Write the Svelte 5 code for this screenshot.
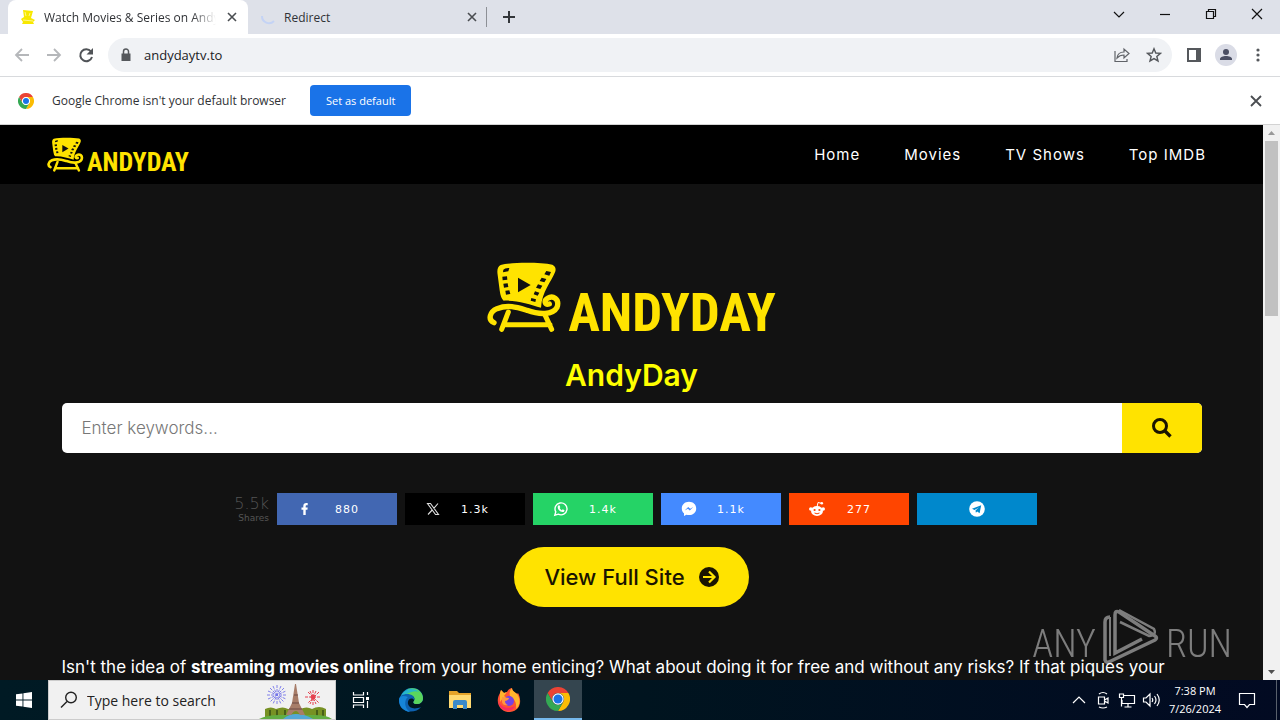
<script>
  const nav = ['Home', 'Movies', 'TV Shows', 'Top IMDB'];
  const shares = [
    { id: 'facebook', count: '880', color: '#4267b2' },
    { id: 'x', count: '1.3k', color: '#000000' },
    { id: 'whatsapp', count: '1.4k', color: '#25d366' },
    { id: 'messenger', count: '1.1k', color: '#448aff' },
    { id: 'reddit', count: '277', color: '#ff4500' },
    { id: 'telegram', count: '', color: '#0088cc' }
  ];
  let keywords = $state('');
</script>

{#snippet chair()}
  <svg class="chair" viewBox="25 35 225 216" aria-hidden="true">
    <path fill="#ffe300" d="M66 44C104 35 185 36 221 43Q235 50 229 66C218 94 190 124 187 172C154 162 112 149 75 151Q66 145 63 120L57 74Q53 50 66 44Z" />
    <g fill="#111">
      <path d="M74 58q5-6 18-5l-3 10-16 3zM71 79l14-1 1 10-14 2zM74 100l13-1 2 11-13 2zM80 121l12-1 3 11-13 2z" />
      <path d="M203 62l14 3-5 11-15-4zM189 82l14 4-6 10-14-4zM178 102l13 4-6 10-13-4zM169 123l13 4-5 9-12-4zM158 143l14 4-2 8-14-4z" />
      <path d="M118 82l38 22-38 22z" />
    </g>
    <g fill="none" stroke="#ffe300" stroke-linecap="round" stroke-width="16">
      <path d="M46 217C26 208 34 184 55 175C88 162 115 171 145 180C183 194 222 194 235 171C244 145 222 134 207 144C194 152 199 164 212 161" />
      <path d="M89 185L69 237M200 196L219 237M76 223H214" stroke-width="15" />
    </g>
  </svg>
{/snippet}

{#snippet cross()}
  <svg width="16" height="16" viewBox="0 0 16 16"><path d="M4 4l8 8M12 4l-8 8" stroke="#4a4d51" stroke-width="1.600" /></svg>
{/snippet}

{#snippet chromeLogo(size)}
  <svg width={size} height={size} viewBox="0 0 24 24">
    <path fill="#ea4335" d="M1.600 6A12 12 0 0 1 22.400 6H12A6 6 0 0 0 6.800 15z" />
    <path fill="#fbbc04" d="M22.400 6A12 12 0 0 1 12 24L17.200 15A6 6 0 0 0 12 6z" />
    <path fill="#34a853" d="M12 24A12 12 0 0 1 1.600 6L6.800 15A6 6 0 0 0 17.200 15z" />
    <circle cx="12" cy="12" r="5.700" fill="#fff" /><circle cx="12" cy="12" r="4.500" fill="#1a73e8" />
  </svg>
{/snippet}

<div class="screen">
  <div class="tabs">
    <div class="tab active">
      <svg width="16" height="16" viewBox="0 0 16 16"><path fill="#f8e800" d="M3 1l10 1-2 7 4 2-2 2 1 2H2l1-2-2-3 3-2z" /><path d="M3 11l10 1M5 3l1 4m4-3l-1 3" stroke="#fff88a" /></svg>
      <span class="tab-title fade">Watch Movies &amp; Series on AndyDay</span>
      <button aria-label="Close tab">{@render cross()}</button>
    </div>
    <div class="tab">
      <svg width="16" height="16" viewBox="0 0 16 16"><path d="M2 7A7 7 0 0 0 14 12" fill="none" stroke="#c4d3f5" stroke-width="2" /></svg>
      <span class="tab-title">Redirect</span>
      <button aria-label="Close tab">{@render cross()}</button>
    </div>
    <i class="divider"></i>
    <button class="new-tab" aria-label="New tab"><svg width="16" height="16" viewBox="0 0 16 16"><path d="M8 2v12M2 8h12" stroke="#33363a" stroke-width="2" /></svg></button>
    <div class="window-controls">
      <button aria-label="Search tabs"><svg width="14" height="14" viewBox="0 0 14 14"><path d="M2 5l5 5 5-5" /></svg></button>
      <button aria-label="Minimize"><svg width="14" height="14" viewBox="0 0 14 14"><path d="M2 7.500h10" /></svg></button>
      <button aria-label="Restore"><svg width="14" height="14" viewBox="0 0 14 14"><path d="M2.500 4.500h7v7h-7zM4.500 4.500v-2h7v7h-2" /></svg></button>
      <button aria-label="Close window"><svg width="14" height="14" viewBox="0 0 14 14"><path d="M2 2l10 10M12 2L2 12" /></svg></button>
    </div>
  </div>

  <div class="toolbar">
    <div class="group">
      <button aria-label="Back"><svg width="20" height="20" viewBox="0 0 20 20"><path d="M17 10H4M10 4l-6 6 6 6" stroke="#b5b7ba" stroke-width="1.800" fill="none" /></svg></button>
      <button aria-label="Forward"><svg width="20" height="20" viewBox="0 0 20 20"><path d="M3 10h13M10 4l6 6-6 6" stroke="#b5b7ba" stroke-width="1.800" fill="none" /></svg></button>
      <button aria-label="Reload"><svg width="20" height="20" viewBox="0 0 20 20"><path d="M15 6.500A6 6 0 1 0 16 12" stroke="#505357" stroke-width="2" fill="none" /><path d="M17 3v6.500h-6.500z" fill="#505357" /></svg></button>
    </div>
    <div class="omnibox">
      <button aria-label="Site information"><svg width="16" height="16" viewBox="0 0 16 16"><path d="M3.500 6.500h9V14h-9z" fill="#55585c" /><path d="M5.500 7V4.500a2.500 2.500 0 0 1 5 0V7" stroke="#55585c" stroke-width="1.500" fill="none" /></svg></button>
      <input aria-label="Address" value="andydaytv.to" />
      <button aria-label="Share"><svg width="18" height="18" viewBox="0 0 18 18" fill="none" stroke="#606368" stroke-width="1.200"><path d="M2 5v10.500h12V13M4 12c.5-4 3-6 7-6V3l5 4.500-5 4.500V9c-3 0-5 .8-7 3z" /></svg></button>
      <button aria-label="Bookmark"><svg width="16" height="16" viewBox="0 0 18 18"><path d="M9 2l2 4.800 5.200.4-4 3.400 1.300 5.100L9 13l-4.500 2.700 1.300-5.100-4-3.400 5.200-.4z" fill="none" stroke="#55585c" stroke-width="1.600" /></svg></button>
    </div>
    <div class="group">
      <button aria-label="Side panel"><svg width="16" height="16" viewBox="0 0 16 16"><path d="M2 2h12v12H2z" fill="none" stroke="#55585c" stroke-width="2" /><path d="M10 2h4v12h-4z" fill="#55585c" /></svg></button>
      <button aria-label="Profile"><svg width="22" height="22" viewBox="0 0 22 22"><circle cx="11" cy="11" r="11" fill="#dadce6" /><circle cx="11" cy="8" r="3" fill="#4a4e63" /><path d="M5 16v-1c0-4 12-4 12 0v1z" fill="#4a4e63" /></svg></button>
      <button aria-label="Menu"><svg width="16" height="16" viewBox="0 0 16 16" fill="#55585c"><circle cx="8" cy="3" r="1.600" /><circle cx="8" cy="8" r="1.600" /><circle cx="8" cy="13" r="1.600" /></svg></button>
    </div>
  </div>

  <div class="infobar">
    {@render chromeLogo(16)}
    <span>Google Chrome isn't your default browser</span>
    <button class="default">Set as default</button>
    <button class="dismiss" aria-label="Dismiss"><svg width="16" height="16" viewBox="0 0 16 16"><path d="M3 3l10 10M13 3L3 13" stroke="#4a4d51" stroke-width="1.800" /></svg></button>
  </div>

  <div class="viewport">
    <div class="site">
      <header>
        <a class="brand small" href="#home">{@render chair()}<span>ANDYDAY</span></a>
        <nav>{#each nav as item}<a href="#{item}">{item}</a>{/each}</nav>
      </header>
      <main>
        <a class="brand" href="#home">{@render chair()}<span>ANDYDAY</span></a>
        <h1>AndyDay</h1>
        <form onsubmit={(e) => e.preventDefault()}>
          <input aria-label="Keywords" placeholder="Enter keywords..." bind:value={keywords} />
          <button aria-label="Search"><svg width="20" height="20" viewBox="0 0 20 20" fill="none" stroke="#1a1400"><circle cx="8" cy="8" r="6.500" stroke-width="3" /><path d="M12.500 12.500l6 6" stroke-width="3.400" /></svg></button>
        </form>
        <div class="shares">
          <div class="total"><b>5.5k</b><small>Shares</small></div>
          {#each shares as s}
            <button style="background:{s.color}" aria-label="Share on {s.id}">
              <svg width="16" height="16" viewBox="0 0 16 16" fill="#fff">
                {#if s.id === 'facebook'}
                  <path d="M6.300 14V8.800H4.500V6.500h1.800V5c0-2 1.100-3 3-3h1.400v2.200H9.600c-.7 0-.9.300-.9 1v1.300h2l-.3 2.300H8.700V14z" />
                {:else if s.id === 'x'}
                  <path d="M2.500 2.500h3l8 11h-3zM13 2.500L8.800 7.300M7.200 9L3 13.500" fill="none" stroke="#ddd" stroke-width="1.100" />
                {:else if s.id === 'whatsapp'}
                  <path d="M1.800 14.200l1-3.400A6 6 0 1 1 5.300 13.200z" fill="none" stroke="#fff" stroke-width="1.400" />
                  <path d="M5.300 4.500l1.200-.2.800 1.900-.7.900c.5 1 1.200 1.600 2.200 2.100l.9-.9 1.800.9c0 3-4.200 1.900-5.700-.1C4.400 7.500 4.400 5.500 5.300 4.500z" />
                {:else if s.id === 'messenger'}
                  <path d="M8 .8C3.800.8.800 3.700.8 7.400c0 2 .8 3.700 2.200 4.900v2.600l2.400-1.200c.8.200 1.700.4 2.600.4 4.200 0 7.200-2.900 7.200-6.700S12.200.8 8 .8z" />
                  <path d="M3.700 9.500l3.500-3.600 2 1.800 3-1.800-3.400 3.600-1.900-1.800z" fill="#448aff" />
                {:else if s.id === 'reddit'}
                  <ellipse cx="8" cy="10" rx="6" ry="5" /><circle cx="1.800" cy="8" r="1.800" /><circle cx="14.200" cy="8" r="1.800" />
                  <path d="M8 6l1-4.500 3.500.8" fill="none" stroke="#fff" /><circle cx="12.800" cy="2.200" r="1.300" />
                  <circle cx="5.600" cy="9" r="1.100" fill="#ff4500" /><circle cx="10.400" cy="9" r="1.100" fill="#ff4500" />
                  <path d="M5.500 12q2.500 1.600 5 0" fill="none" stroke="#ff4500" />
                {:else}
                  <circle cx="8" cy="8" r="7.800" /><path d="M3 7.800l9.200-3.600-1.600 8-2.400-1.800-1.300 1.300-.4-2.300 3.700-3.200-4.700 2.900z" fill="#0088cc" />
                {/if}
              </svg>
              {#if s.count}<span>{s.count}</span>{/if}
            </button>
          {/each}
        </div>
        <a class="full" href="#full">View Full Site
          <svg width="20" height="20" viewBox="0 0 20 20"><circle cx="10" cy="10" r="10" fill="#1a1400" /><path d="M4 10h11M10 4.500l5.500 5.500-5.500 5.500" stroke="#ffe300" stroke-width="2.200" fill="none" /></svg>
        </a>
        <p>Isn't the idea of <strong>streaming movies online</strong> from your home enticing? What about doing it for free and without any risks? If that piques your</p>
      </main>
    </div>
    <div class="scrollbar">
      <svg width="17" height="16" viewBox="0 0 17 16"><path d="M5 10l3.500-4 3.500 4z" fill="#999" /></svg>
      <i></i>
      <svg width="17" height="16" viewBox="0 0 17 16"><path d="M5 6l3.500 4L12 6z" fill="#505050" /></svg>
    </div>
    <div class="watermark">
      <span>ANY</span>
      <svg width="56" height="58" viewBox="0 0 56 58" fill="none" stroke="#fff" stroke-width="3.500">
        <path d="M7 9Q2 9 2 14V52Q3 56 8 53L52 32Q55 30 52 28L16 4Q12 2 12 7V45L39 31" />
        <path d="M17 14L46 28Q54 27 51 21L16 2" stroke-width="2.500" />
        <path d="M7 9V48" stroke-width="2" />
      </svg>
      <span>RUN</span>
    </div>
  </div>

  <footer>
    <button class="start" aria-label="Start"><svg width="16" height="16" viewBox="0 0 16 16" fill="#fff"><path d="M0 2.300l6.500-.9v6.100H0zM7.400 1.300L16 0v7.500H7.400zM0 8.400h6.500v6.200L0 13.700zM7.400 8.400H16V16l-8.600-1.200z" /></svg></button>
    <label class="search">
      <svg width="18" height="18" viewBox="0 0 18 18" fill="none" stroke="#222" stroke-width="1.400"><circle cx="11" cy="6.500" r="5.300" /><path d="M7 10.500L1 16.500" /></svg>
      <input aria-label="Type here to search" placeholder="Type here to search" />
      <svg width="78" height="38" viewBox="0 0 78 38">
        <g stroke="#7474ea" stroke-width="0.900"><path d="M20 4v20M10 14h20M13 7l14 14M27 7L13 21M16 5l8 18M24 5l-8 18M11 10l18 8M11 18l18-8" stroke-dasharray="3 1" /></g>
        <g stroke="#e5404e" stroke-width="1"><path d="M56 9v15M48 16h16M51 11l11 11M62 11L51 22M53 10l6 13M59 10l-6 13" stroke-dasharray="3 1" /><circle cx="56" cy="16" r="2" fill="#e5404e" /></g>
        <path d="M8 28q6-3 11 0 7-3 12 0h12q7-3 12 0 7-4 14 0v9H8z" fill="#779124" /><path d="M13 29v8M20 29v8M28 29v8M60 29v8M66 29v8" stroke="#465f18" stroke-width="2" />
        <path d="M2 38q8-4 20-4h35q13 0 18 4z" fill="#62ad42" /><path d="M26 38q6-5 13-5 9 0 17 5z" fill="#54a8d6" />
        <path d="M38 3h1l3 19 6 12h-5q-4-8-9 0h-5l6-12z" fill="#a77d69" /><path d="M35 22h7M32 28h13M37 14h4" stroke="#6d4b45" stroke-width="1.200" />
      </svg>
    </label>
    <div class="apps">
      <button class="task" aria-label="Task view"><svg width="18" height="18" viewBox="0 0 18 18" fill="none" stroke="#fff" stroke-width="1.200"><path d="M1.500 1v3h10V1M1.500 17v-3h10v3M1.500 6.500h10v5h-10zM15.500 1v3M15.500 10v7" /><path d="M14 6h3v3h-3z" fill="#fff" stroke="none" /></svg></button>
      <button aria-label="Edge"><svg width="24" height="24" viewBox="0 0 24 24">
        <path fill="#1788d1" d="M1 10C3 3 8 0 13 0c7 0 11 5 11 10 0 4-3 6-6 6-4 0-4-2-3-3 2-3-1-6-5-6-5 0-8 2-9 3z" />
        <path fill="#5ad55d" d="M9 1c8-3 15 3 15 9 0 4-3 6-6 6-4 0-4-2-3-3 3-5-5-8-10-5z" /><path fill="#26b7c9" d="M2 8C6 0 15-1 20 4 13 1 9 7 2 8z" />
        <path fill="#0d61b0" d="M0 12c0-4 4-6 8-6 5 0 8 3 7 6-2-3-7-1-6 4 1 4 6 6 13 3-5 7-22 7-22-7z" /><path fill="#1685d8" d="M0 12c0-4 4-5 9-3-4 3-4 11 2 15C4 23 0 18 0 12z" />
      </svg></button>
      <button aria-label="File Explorer"><svg width="22" height="20" viewBox="0 0 22 20"><path fill="#e5a42a" d="M0 1h8l2 2h12v15H0z" /><path fill="#ffda72" d="M0 5h22v13H0z" /><path fill="#3989c9" d="M4 19v-7q0-2 2-2h10q2 0 2 2v7h-4v-4H8v4z" /></svg></button>
      <button aria-label="Firefox"><svg width="24" height="24" viewBox="0 0 24 24">
        <path fill="#ff5232" d="M3 5l1-3 3 3 3-1c1-2 3-4 5-4 0 3 3 4 5 6l1-1c4 7 3 18-8 19C4 25-3 15 3 5z" /><path fill="#ffb52c" d="M15 0c0 3 3 4 5 6 4 5 3 12-1 15 1-8-3-11-6-13-1-3 0-6 2-8zM3 5l1-3 3 3 3-1-3 4 3 2H6L3 14z" />
        <path fill="#f72c63" d="M1 12c2 7 9 10 17 6-2 7-16 7-17-6z" /><circle cx="12" cy="13" r="5" fill="#7542e5" /><path fill="#ff9640" d="M5 9l7 1q0 2-4 3 0 3 3 4-5 1-6-3z" />
      </svg></button>
      <button class="current" aria-label="Chrome">{@render chromeLogo(24)}</button>
    </div>
    <div class="tray">
      <button aria-label="Hidden icons"><svg width="18" height="18" viewBox="0 0 18 18"><path d="M3 12l6-6 6 6" /></svg></button>
      <button aria-label="Meet now"><svg width="18" height="18" viewBox="0 0 18 18"><path d="M4.500 6h6v7h-6zM10.500 9l3.500-2v5l-3.500-2M5 3q4-3 8 0M5 16q4 2 8 0" /></svg></button>
      <button aria-label="Network"><svg width="18" height="18" viewBox="0 0 18 18"><path d="M6 4.500h10.500v8H4V9M10 12.500v3M6.500 16h7M1.500 3h4v3.500h-4zM3.500 6.500v9" /></svg></button>
      <button aria-label="Volume"><svg width="18" height="18" viewBox="0 0 18 18"><path d="M1.500 7h2.500l4-4v12l-4-4H1.500zM10 7q1.500 2 0 4M12.500 5q3 4 0 8M15 3q4.500 6 0 12" /></svg></button>
      <div class="clock"><span>7:38 PM</span><span>7/26/2024</span></div>
      <button class="notes" aria-label="Notifications"><svg width="18" height="18" viewBox="0 0 18 18"><path d="M1.500 2.500h15v11h-5l-2.500 3-2.500-3h-5z" /></svg></button>
      <i></i>
    </div>
  </footer>
</div>

<style>
  :global(body) { margin: 0; }
  .screen, .screen * { box-sizing: border-box; }
  .screen { height: 100vh; display: flex; flex-direction: column; overflow: hidden; font-family: "Open Sans", "Noto Sans", sans-serif; font-size: 12px; color: #303236; }
  button { border: 0; padding: 0; background: none; font: inherit; color: inherit; display: flex; align-items: center; justify-content: center; flex-shrink: 0; }
  input { border: 0; padding: 0; background: none; font: inherit; color: inherit; outline: none; min-width: 0; }
  a { color: inherit; text-decoration: none; }
  svg { flex-shrink: 0; display: block; }

  .tabs { height: 34px; background: #dee1e9; display: flex; align-items: center; padding-left: 8px; }
  .tab { width: 240px; height: 34px; display: flex; align-items: center; gap: 8px; padding: 0 8px 0 12px; }
  .tab.active { background: #fff; border-radius: 8px 8px 0 0; }
  .tab-title { flex: 1; min-width: 0; overflow: hidden; white-space: nowrap; }
  .fade { mask-image: linear-gradient(90deg, #000 86%, transparent); }
  .divider { width: 1px; height: 20px; background: #8d9096; margin: 0 14px 0 -2px; }
  .window-controls { display: flex; margin-left: auto; height: 28px; align-self: flex-start; }
  .window-controls button { width: 46px; }
  .window-controls path { stroke: #111; fill: none; stroke-width: 1.200; }

  .toolbar { height: 43px; padding: 0 8px; background: #fff; border-bottom: 1px solid #d8dadd; display: flex; align-items: center; gap: 8px; }
  .group { display: flex; gap: 4px; }
  .group button, .omnibox button { width: 28px; height: 28px; }
  .omnibox { flex: 1; min-width: 0; height: 34px; border-radius: 17px; background: #f0f2f5; padding: 0 4px; display: flex; align-items: center; gap: 4px; }
  .omnibox input { flex: 1; font-size: 13px; color: #202124; }

  .infobar { height: 48px; padding: 0 16px 0 18px; background: #fff; border-bottom: 1px solid #d3d3d3; display: flex; align-items: center; gap: 18px; }
  .infobar span { min-width: 240px; }
  .default { height: 31px; padding: 0 16px; border-radius: 4px; background: #1a73e8; color: #fff; font-size: 11px; }
  .dismiss { margin-left: auto; }

  .viewport { flex: 1; min-height: 0; display: flex; position: relative; background: #121212; overflow: hidden; }
  .site { flex: 1; min-width: 0; font-family: Inter, sans-serif; color: #fff; }
  header { height: 59px; padding: 0 57px 0 47px; background: #000; display: flex; align-items: center; justify-content: space-between; }
  nav { display: flex; gap: 44px; font-size: 15px; letter-spacing: 1px; }
  .brand { display: flex; align-items: flex-end; gap: 6px; color: #ffe300; font: 700 53px/42px "Roboto Condensed", "Liberation Sans Narrow", "DejaVu Sans Condensed", sans-serif; }
  .chair { width: 75px; height: 72px; }
  .brand.small { gap: 3px; font-size: 26px; line-height: 22px; }
  .small .chair { width: 37px; height: 36px; }
  main { max-width: 1140px; margin: 0 auto; padding-top: 78px; display: flex; flex-direction: column; align-items: center; }
  h1 { margin: 23px 0 10px; font-size: 30px; line-height: 36px; font-weight: 600; color: #ffff00; }
  form { width: 100%; height: 50px; display: flex; background: #fff; border-radius: 5px; overflow: hidden; font-size: 17px; color: #444; }
  form input { flex: 1; padding: 0 20px; }
  form input::placeholder { color: #777; opacity: 1; font-weight: 300; }
  form button { width: 80px; background: #ffe300; }
  .shares { display: flex; gap: 8px; margin: 40px 0 22px; font-family: "DejaVu Sans", sans-serif; }
  .shares button { width: 120px; height: 32px; padding: 0 20px; color: #fff; font-size: 11px; }
  .shares button span { flex: 1; padding-left: 4px; letter-spacing: 1px; }
  .total { width: 43px; display: flex; flex-direction: column; align-items: flex-end; justify-content: center; color: #555; }
  .total b { font-weight: 200; font-size: 16px; line-height: 18px; }
  .total small { font-size: 9px; line-height: 10px; }
  .full { height: 60px; padding: 0 30px; border-radius: 30px; background: #ffe300; color: #1a1400; display: flex; align-items: center; gap: 14px; font-size: 22px; font-weight: 500; }
  p { width: 100%; margin: 46px 0 0; font-size: 17px; line-height: 28px; white-space: nowrap; }
  strong { font-weight: 700; }

  .scrollbar { width: 17px; background: #f1f1f1; display: flex; flex-direction: column; }
  .scrollbar i { width: 13px; height: 175px; margin: 0 auto auto; background: #c1c1c1; }
  .watermark { position: absolute; right: 48px; bottom: 14px; display: flex; align-items: flex-end; gap: 7px; opacity: .45; color: #fff; font: 300 38px/44px "Roboto Condensed", "Liberation Sans Narrow", "DejaVu Sans Condensed", sans-serif; pointer-events: none; }

  footer { height: 40px; display: flex; background: linear-gradient(90deg, #001a24, #00141f 50%, #020a22); color: #fff; }
  .start { width: 48px; }
  .search { width: 288px; background: #f1f1f1; border: 1px solid #ccc; display: flex; align-items: center; padding-left: 11px; gap: 9px; font-size: 14px; color: #222; }
  .search input { flex: 1; }
  .search input::placeholder { color: #222; opacity: 1; }
  .apps { display: flex; gap: 1px; }
  .apps button { width: 48px; }
  .apps .task { width: 50px; }
  .apps .current { background: #34454f; border-bottom: 2px solid #76b9ed; }
  .tray { margin-left: auto; padding-right: 3px; display: flex; }
  .tray button { width: 24px; }
  .tray path { fill: none; stroke: #fff; stroke-width: 1.200; }
  .tray i { width: 1px; margin-left: 9px; background: #59606c; }
  .clock { width: 64px; display: flex; flex-direction: column; align-items: center; justify-content: center; line-height: 18px; font-size: 11px; }
  .tray .notes { width: 40px; }
</style>
